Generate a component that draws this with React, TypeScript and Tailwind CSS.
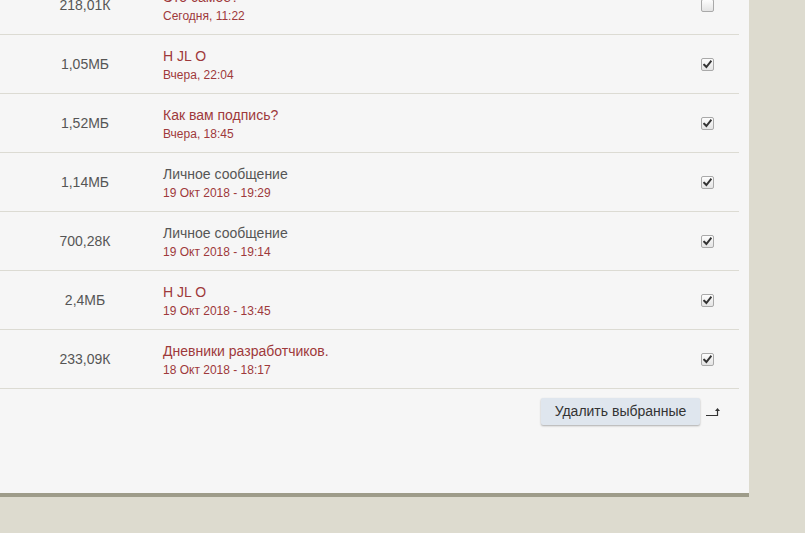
import React from "react"

type Row = {
  size: string
  title: string
  date: string
  red: boolean
  checked: boolean
}

const rows: Row[] = [
  { size: "218,01К", title: "Это самое?", date: "Сегодня, 11:22", red: true, checked: false },
  { size: "1,05МБ", title: "H JL O", date: "Вчера, 22:04", red: true, checked: true },
  { size: "1,52МБ", title: "Как вам подпись?", date: "Вчера, 18:45", red: true, checked: true },
  { size: "1,14МБ", title: "Личное сообщение", date: "19 Окт 2018 - 19:29", red: false, checked: true },
  { size: "700,28К", title: "Личное сообщение", date: "19 Окт 2018 - 19:14", red: false, checked: true },
  { size: "2,4МБ", title: "H JL O", date: "19 Окт 2018 - 13:45", red: true, checked: true },
  { size: "233,09К", title: "Дневники разработчиков.", date: "18 Окт 2018 - 18:17", red: true, checked: true },
]

function Checkbox({ checked }: { checked: boolean }) {
  return (
    <span className="flex h-[13px] w-[13px] items-center justify-center rounded-[2px] border border-[#a9a9a9] bg-gradient-to-b from-[#fdfdfd] to-[#e4e4e4]">
      {checked && (
        <svg width="9" height="9" viewBox="0 0 9 9">
          <path d="M1.2 4.8 L3.4 7 L7.8 1.5" fill="none" stroke="#333" strokeWidth="2" strokeLinecap="square" />
        </svg>
      )}
    </span>
  )
}

export default function App() {
  return (
    <div className="h-[533px] w-[805px] overflow-hidden bg-[#dddbcf]" style={{ fontFamily: '"Liberation Sans", Arial, sans-serif' }}>
      <div className="flex h-[497px] w-[749px] flex-col border-b-4 border-[#9e9c8a] bg-[#f6f6f6]">
        <div className="-mt-[24px] w-[739px]">
          {rows.map((r, i) => (
            <div key={i} className="flex h-[59px] items-center border-b border-[#dcdbd3]">
              <div className="w-[160px] pl-[10px] text-center text-[14px] text-[#555]">{r.size}</div>
              <div className="flex flex-1 flex-col pl-[3px]">
                <span className={"text-[14px] leading-[20px] " + (r.red ? "text-[#9e393b]" : "text-[#555]")}>{r.title}</span>
                <span className="mt-[1px] text-[12px] leading-[16px] text-[#9e393b]">{r.date}</span>
              </div>
              <div className="pr-[25px]">
                <Checkbox checked={r.checked} />
              </div>
            </div>
          ))}
        </div>
        <div className="flex w-[739px] items-center justify-end pt-[9px]">
          <button className="h-[27px] w-[159px] rounded-[2px] bg-[#dfe6ee] text-[14px] text-[#333] shadow-[0_1px_2px_rgba(0,0,0,0.3)]">
            Удалить выбранные
          </button>
          <svg className="ml-[6px] mr-[18px]" width="15" height="10" viewBox="0 0 15 10">
            <path d="M0 8.5 H11.5 V3" fill="none" stroke="#333" strokeWidth="1.2" />
            <path d="M9 4 L11.5 1 L14 4 Z" fill="#333" />
          </svg>
        </div>
      </div>
    </div>
  )
}
